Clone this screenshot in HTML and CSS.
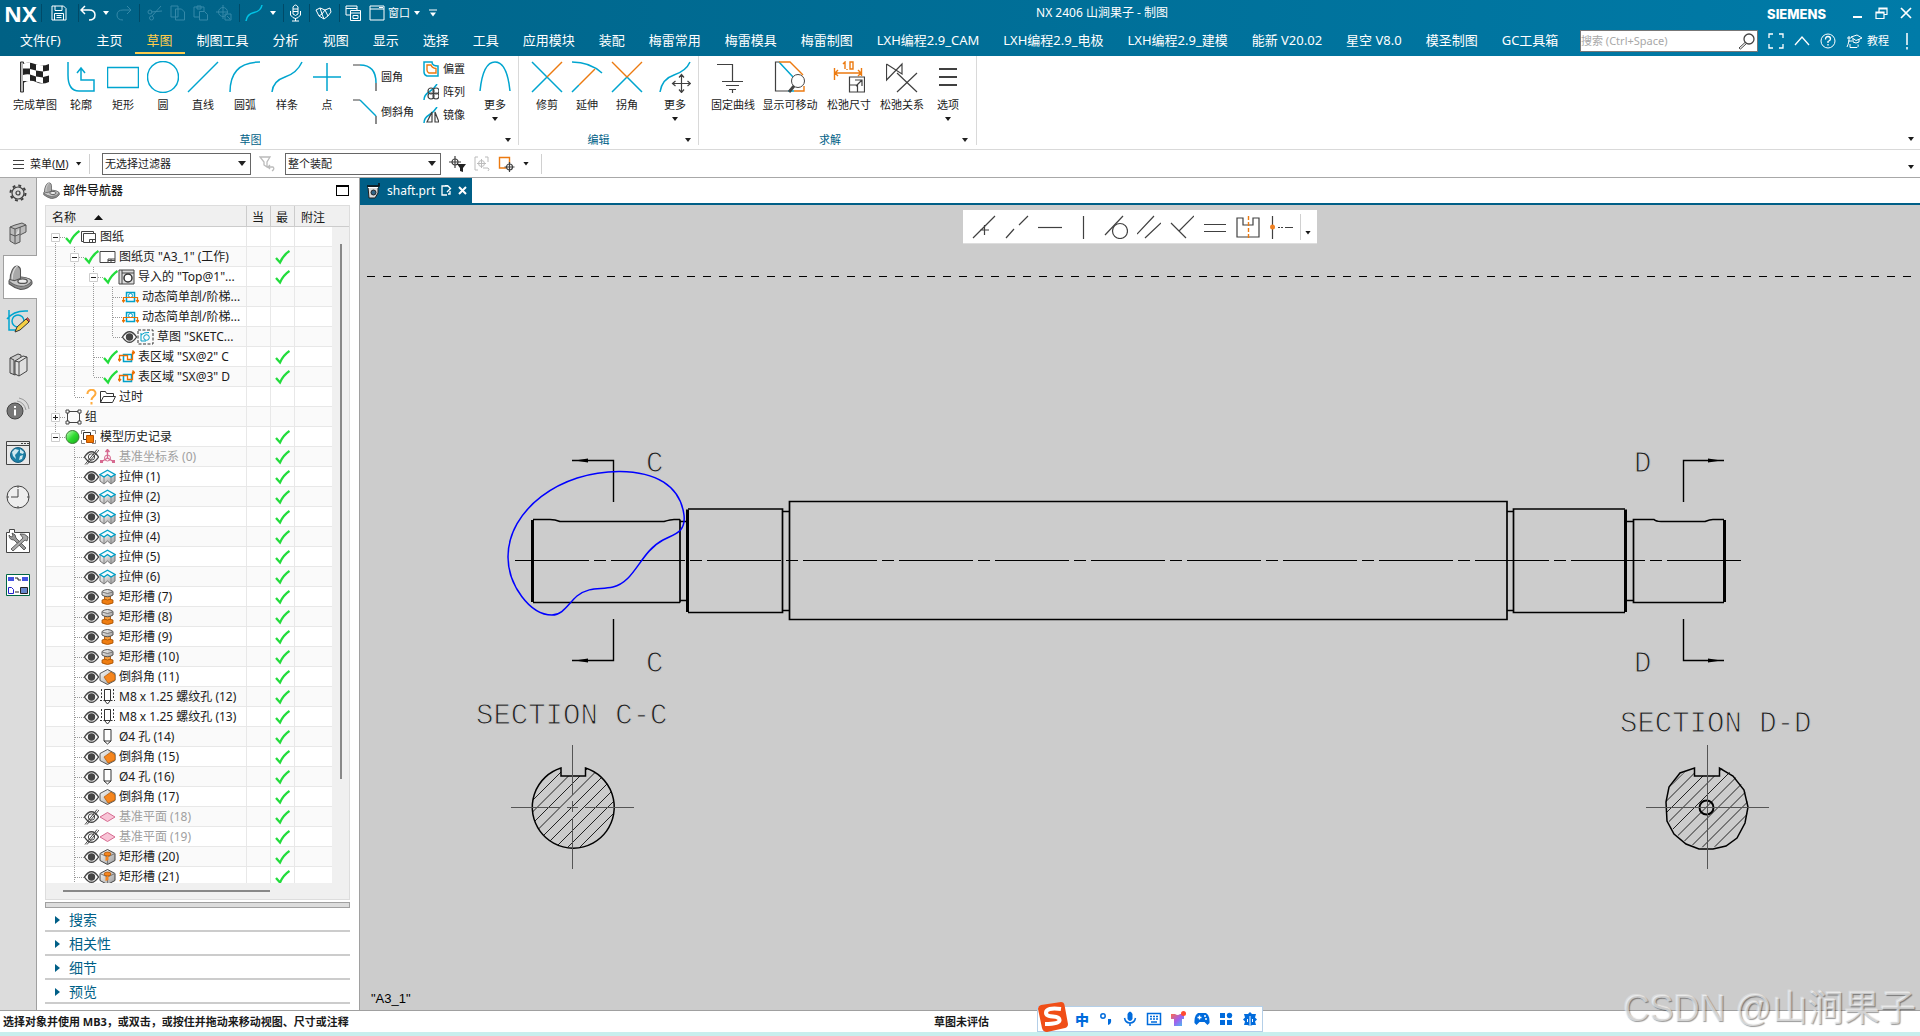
FILE: index.html
```html
<!DOCTYPE html>
<html lang="zh-CN">
<head>
<meta charset="utf-8">
<title>NX 2406 - 制图</title>
<link rel="stylesheet" href="styles.css">
</head>
<body>
<svg class="defs" aria-hidden="true">
  <symbol id="gv" viewBox="0 0 19 20"><path d="M9.5 0V20" class="dot"/></symbol>
  <symbol id="gt" viewBox="0 0 19 20"><path d="M9.5 0V20M10 10.500H19" class="dot"/></symbol>
  <symbol id="gl" viewBox="0 0 19 20"><path d="M9.5 0V10M10 10.500H19" class="dot"/></symbol>
  <symbol id="minus" viewBox="0 0 19 20"><path d="M9.5 0V20M10 10.500H19" class="dot"/><path d="M5.500 6.500h8v8h-8z" fill="#fff" stroke="#ccc"/><path d="M7 10.500h5" stroke="#222"/></symbol>
  <symbol id="minus-top" viewBox="0 0 19 20"><path d="M9.500 14V20M10 10.500H19" class="dot"/><path d="M5.500 6.500h8v8h-8z" fill="#fff" stroke="#ccc"/><path d="M7 10.500h5" stroke="#222"/></symbol>
  <symbol id="minus-end" viewBox="0 0 19 20"><path d="M9.500 0V6M10 10.500H19" class="dot"/><path d="M5.500 6.500h8v8h-8z" fill="#fff" stroke="#ccc"/><path d="M7 10.500h5" stroke="#222"/></symbol>
  <symbol id="plus" viewBox="0 0 19 20"><path d="M9.5 0V20M10 10.500H19" class="dot"/><path d="M5.500 6.500h8v8h-8z" fill="#fff" stroke="#ccc"/><path d="M7 10.500h5M9.500 8v5" stroke="#222"/></symbol>
  <symbol id="ok" viewBox="0 0 15 16"><path d="M1 9l4 4.500C7 9 10 5 14.500 2" fill="none" stroke="#22dc3c" stroke-width="2.300"/></symbol>
  <symbol id="eye" viewBox="0 0 15 16"><path d="M.5 8Q7.500-2.500 14.500 8Q7.500 18.500 .5 8z" fill="#fff" stroke="#444" stroke-width="1.300"/><circle cx="7.500" cy="8" r="3.700" fill="#444"/></symbol>
  <symbol id="eye-off" viewBox="0 0 15 16"><path d="M.5 8Q7.500-2.500 14.500 8Q7.500 18.500 .5 8z" fill="none" stroke="#444" stroke-width="1.300"/><circle cx="7.500" cy="8" r="3.200" fill="none" stroke="#444"/><path d="M1 15.500L13 .5M3 15.500L15 1" stroke="#444"/></symbol>
  <symbol id="sheets" viewBox="0 0 17 16"><path d="M3.500 12.500h-2v-10h12v2M3.500 4.500h12v9h-12z" fill="none" stroke="#444"/><path d="M9.500 13.500v-3h6M12.500 10.500v3" fill="none" stroke="#444"/></symbol>
  <symbol id="sheet" viewBox="0 0 17 16"><path d="M1 2.500h15v11H1z" fill="#fff" stroke="#444"/><path d="M9 13v-3h7M12 10v3M9 11.500h7" fill="none" stroke="#444"/></symbol>
  <symbol id="view" viewBox="0 0 17 16"><path d="M1 1h15v14H1z" fill="#ddd" stroke="#444"/><path d="M4 1v14M4 4h12" stroke="#444"/><circle cx="10" cy="9" r="4" fill="#fff" stroke="#333" stroke-width="1.500"/></symbol>
  <symbol id="cut-view" viewBox="0 0 17 16"><path d="M4.500 3.500h8v9h-8z" fill="none" stroke="#00a0c8" stroke-width="1.500"/><circle cx="8.500" cy="6.500" r="2" fill="#fff" stroke="#00a0c8"/><path d="M1.500 12V8.500h14V12M0 11l1.500 2L3 11M14 11l1.500 2 1.500-2" fill="none" stroke="#ec6f00" stroke-width="1.200"/></symbol>
  <symbol id="sketch" viewBox="0 0 17 16"><path d="M1 1h15v14H1z" fill="none" stroke="#333" stroke-dasharray="3 1.500"/><path d="M4 4v8h5M4 6q3-3 8-2.500" fill="none" stroke="#00a0c8"/><circle cx="9.500" cy="8.500" r="2.800" fill="none" stroke="#00a0c8"/></symbol>
  <symbol id="section" viewBox="0 0 17 16"><path d="M5.500 5.500h8v7h-8z" fill="none" stroke="#00a0c8" stroke-width="1.500"/><path d="M1.500 11V6.500h8v4h5v-7h2M0 10l1.500 2L3 10M14.500 1.500l2 2-2 2" fill="none" stroke="#ec6f00" stroke-width="1.300"/></symbol>
  <symbol id="ask" viewBox="0 0 15 16"><path d="M3.500 5C3-.5 12-.5 11.500 4.500c0 3-4 3-4 6.500" fill="none" stroke="#ffab3d" stroke-width="2"/><path d="M6.500 13h2v2.500h-2z" fill="#ffab3d"/></symbol>
  <symbol id="folder" viewBox="0 0 17 16"><path d="M1.500 13.500V2.500h5l1 2h7v3M1.500 13.500l3-6h12l-3 6z" fill="none" stroke="#333"/></symbol>
  <symbol id="group" viewBox="0 0 17 16"><path d="M2.500 2.500h12v11h-12z" fill="none" stroke="#444"/><path d="M1 1h3v3H1zM13 1h3v3h-3zM1 12h3v3H1zM13 12h3v3h-3z" fill="#fff" stroke="#444"/></symbol>
  <symbol id="ball" viewBox="0 0 15 16"><circle cx="7.500" cy="8" r="6.500" fill="url(#green)" stroke="#397c32"/></symbol>
  <symbol id="history" viewBox="0 0 17 16"><path d="M1.500 5V1.500H5M12 1.500h3.500V5M15.500 11v3.500H12M5 14.500H1.500V11" fill="none" stroke="#888"/><path d="M3.500 3.500h7v7h-7z" fill="#fff" stroke="#333"/><path d="M6.500 6.500h7v7h-7z" fill="#f07800" stroke="#b85000"/></symbol>
  <symbol id="csys" viewBox="0 0 17 16"><path d="M8.500 1v8M8.500 9L2 13M8.500 9L15 13M6.500 3l2-2.500 2 2.500" fill="none" stroke="#d66a90" stroke-width="1.400"/><circle cx="8.500" cy="9" r="3" fill="none" stroke="#d66a90"/><path d="M1 11h3v3H1zM13 11h3v3h-3z" fill="#d66a90"/></symbol>
  <symbol id="extrude" viewBox="0 0 17 16"><path d="M1 5.500l4 2 3.500-2 3.500 2 4-2v6.500l-4 3-3.500-3-3.500 3-4-3z" fill="url(#steel)" stroke="#777"/><path d="M5 8v6.500M12 8v6.500" stroke="#888"/><path d="M1 5.500L8.500 1.200 16 5.500 12 8 8.500 5.500 5 8z" fill="#f2fbfd" stroke="#00a0c8" stroke-width="1.300"/></symbol>
  <symbol id="groove" viewBox="0 0 17 16"><path d="M3 11q5.500-3 11 0v3q-5.500 3-11 0z" fill="#ef7d10" stroke="#a04c00" stroke-width=".8"/><path d="M5.500 7h6v3q-3 2-6 0z" fill="#f7a040" stroke="#a04c00" stroke-width=".8"/><path d="M3 2.500q5.500-4 11 0v3.500q-5.500 3.500-11 0z" fill="url(#steel)" stroke="#555"/><path d="M3 3q5.500 3 11 0" fill="none" stroke="#777"/></symbol>
  <symbol id="chamfer" viewBox="0 0 17 16"><path d="M1 4.500L8.500.5 16 4.500v7L8.500 15.500 1 11.500z" fill="url(#steel)" stroke="#555"/><path d="M5 8l7-5 4 3v5l-7 3z" fill="#f6861f" stroke="#b85a00" stroke-width=".7"/></symbol>
  <symbol id="thread" viewBox="0 0 17 16"><path d="M5.500.5h6v11h-6zM5.500 11.500l3 3.500 3-3.500" fill="#fff" stroke="#333"/><path d="M2.500 0v10M14.500 0v10M1 11.500h15" fill="none" stroke="#333" stroke-dasharray="2 1.500"/></symbol>
  <symbol id="hole" viewBox="0 0 17 16"><path d="M5 .5h7v11.500l-3.500 3L5 12z" fill="#fff" stroke="#333"/><path d="M5 12h7" stroke="#333"/></symbol>
  <symbol id="plane" viewBox="0 0 17 16"><path d="M1 8l7.500-4.500L16 8l-7.500 4.500z" fill="#f8c4d6" stroke="#d66a90"/></symbol>
  <symbol id="slot" viewBox="0 0 17 16"><path d="M1 4.500L8.500.5 16 4.500v7L8.500 15.500 1 11.500z" fill="url(#steel)" stroke="#444"/><path d="M1 4.500l7.500 3.500L16 4.500M8.500 8v7.500" fill="none" stroke="#777"/><ellipse cx="8.500" cy="5" rx="3.500" ry="2" fill="#f6861f" stroke="#a04c00" stroke-width=".7"/><path d="M6.500 8l3-1v4l-3 1z" fill="#f6861f"/></symbol>
  <symbol id="bracket" viewBox="0 0 24 24"><path d="M1 16q0-2 4-3l8-1q10 1 10 4v2q-3 5-11 5.500Q6 22 1 18z" fill="#8f8f8f" stroke="#555"/><path d="M1 15.500q0-2 4-3l8-1q9 1 9.500 4-3 5-10.500 5Q6 20 1 15.500z" fill="#c8c8c8" stroke="#666"/><path d="M2 14q0-5 2-9 2-4 5-4 3 1 3 4v8l-6 2z" fill="#a8a8a8" stroke="#555"/><path d="M4 14q0-6 2-9.500Q8 1 9.500 1" fill="none" stroke="#ddd"/><ellipse cx="14" cy="15.500" rx="4.500" ry="2.200" fill="#eee" stroke="#555" stroke-width="1.300"/></symbol>
  <linearGradient id="green" x1="0" y1="0" x2="1" y2="1"><stop offset="0" stop-color="#d0ffc8"/><stop offset=".5" stop-color="#2fdc2f"/><stop offset="1" stop-color="#14a81b"/></linearGradient>
  <linearGradient id="steel" x1="0" y1="0" x2="1" y2="1"><stop offset="0" stop-color="#fff"/><stop offset="1" stop-color="#999"/></linearGradient>
  <linearGradient id="shirt" x1="0" y1="0" x2="1" y2="1"><stop offset="0" stop-color="#ff6a4a"/><stop offset=".5" stop-color="#a060f0"/><stop offset="1" stop-color="#40c8f0"/></linearGradient>
</svg>

<header class="top">
  <div class="titlebar">
    <span class="nx">NX</span><i class="sep"></i>
    <button class="q save" aria-label="保存"><svg width="16" height="16" viewBox="0 0 16 16"><path d="M1 1h11.500L15 3.500V15H1zM4 1v4.500h7V1M3.500 15V8.500h9V15M5.500 10.500h5M5.500 12.500h5"/></svg></button>
    <i class="sep"></i>
    <button class="q undo" aria-label="撤销"><svg width="16" height="16" viewBox="0 0 16 16"><path d="M5 1L1 5l4 4M1 5h8q6 0 6 5t-6 5" stroke-width="1.500"/></svg></button>
    <i class="tri"></i>
    <button class="q dim redo" aria-label="重做"><svg width="16" height="16" viewBox="0 0 16 16"><path d="M11 1l4 4-4 4M15 5H7q-6 0-6 5t6 5"/></svg></button>
    <i class="sep"></i>
    <button class="q dim" aria-label="剪切"><svg width="16" height="16" viewBox="0 0 16 16"><path d="M14 1L5 11M15 6L4 7"/><circle cx="3" cy="7" r="2"/><circle cx="4.500" cy="13" r="2"/></svg></button>
    <button class="q dim" aria-label="复制"><svg width="16" height="16" viewBox="0 0 16 16"><path d="M1 1h7v11H1zM5.500 4h6l3 3v8h-9z"/></svg></button>
    <button class="q dim" aria-label="粘贴"><svg width="16" height="16" viewBox="0 0 16 16"><path d="M6 12H1V2h10v4M4 2V1h4v3H4zM6.500 6.500h5l3 3V15h-8z"/></svg></button>
    <button class="q dim" aria-label="重复命令"><svg width="16" height="16" viewBox="0 0 16 16"><circle cx="7" cy="7" r="4.500"/><path d="M7 0v14M0 7h12M9 9h6v6H9zM11 11l3 3"/></svg></button>
    <i class="sep"></i>
    <button class="q curve" aria-label="曲线"><svg width="18" height="18" viewBox="0 0 18 18"><path class="lit" d="M1 17Q2 10 9 8.500T17 1"/></svg></button>
    <i class="tri"></i><i class="sep"></i>
    <button class="q near" aria-label="语音"><svg width="13" height="18" viewBox="0 0 13 18"><path d="M4 3q2.500-4 5 0v7q-2.500 3-5 0zM1.500 7v4q5 7 10 0V7M6.500 14v3M3 17h7M4 5h5M4 7.500h5"/></svg></button>
    <i class="sep"></i>
    <button class="q near" aria-label="橡皮"><svg width="17" height="14" viewBox="0 0 17 14"><path d="M1 4l4-2 5 2 3 6-4 3-5-3zM5 2l2 6M10 4l5-2 1 4-3 4M7 8l3-4M4 10l3-2 2 5"/></svg></button>
    <i class="sep"></i>
    <button class="q near" aria-label="切换窗口"><svg width="17" height="17" viewBox="0 0 17 17"><path d="M5 10H1V1h11v4M1 3.500h11M5.500 5.500h10v10h-10zM5.500 8h10M8 10.500h5v3H8z"/></svg></button>
    <button class="q win"><svg width="16" height="16" viewBox="0 0 16 16"><path d="M1 1h14v14H1zM1 4h14M10 2.500h4"/></svg>窗口</button>
    <i class="tri win-tri"></i>
    <button class="q" aria-label="自定义快速访问"><svg width="8" height="8" viewBox="0 0 8 8"><path d="M0 1h8"/><path class="solid" d="M1 3.500h6l-3 4z"/></svg></button>
    <h1>NX 2406 山涧果子 - 制图</h1>
    <b class="siemens">SIEMENS</b>
    <button class="q w1" aria-label="最小化"><svg width="10" height="14" viewBox="0 0 10 14"><path d="M0 11h9" stroke-width="2"/></svg></button>
    <button class="q w2" aria-label="还原"><svg width="13" height="13" viewBox="0 0 13 13"><path d="M4 4.500V1h8v6.500H9M1 5h8v6.500H1zM4 2h8M1 6h8" stroke-width="1.200"/></svg></button>
    <button class="q w3" aria-label="关闭"><svg width="12" height="12" viewBox="0 0 12 12"><path d="M1 1l10 10M11 1L1 11" stroke-width="1.700"/></svg></button>
  </div>
  <nav class="menubar">
    <a class="file" href="#">文件(F)</a><a href="#">主页</a><a class="on" href="#">草图</a><a href="#">制图工具</a><a href="#">分析</a><a href="#">视图</a><a href="#">显示</a><a href="#">选择</a><a href="#">工具</a><a href="#">应用模块</a><a href="#">装配</a><a href="#">梅雷常用</a><a href="#">梅雷模具</a><a href="#">梅雷制图</a><a href="#">LXH编程2.9_CAM</a><a href="#">LXH编程2.9_电极</a><a href="#">LXH编程2.9_建模</a><a href="#">能新 V20.02</a><a href="#">星空 V8.0</a><a href="#">模圣制图</a><a href="#">GC工具箱</a>
    <div class="tools-right">
      <label class="find"><input type="text" placeholder="搜索 (Ctrl+Space)" aria-label="搜索"><svg width="17" height="17" viewBox="0 0 17 17"><circle cx="11" cy="6" r="5" fill="#fff" stroke="#444" stroke-width="1.300"/><path d="M7 9.500L1 15l1.500 1L8.500 10.500" fill="none" stroke="#444"/></svg></label>
      <button class="q" aria-label="全屏"><svg width="16" height="16" viewBox="0 0 16 16"><path d="M1 5V1h4M11 1h4v4M15 11v4h-4M5 15H1v-4" stroke-width="1.300"/></svg></button>
      <button class="q" aria-label="收起"><svg width="16" height="16" viewBox="0 0 16 16"><path d="M1 12l7-8 7 8" stroke-width="1.300"/></svg></button>
      <button class="q" aria-label="帮助"><svg width="16" height="16" viewBox="0 0 16 16"><circle cx="8" cy="8" r="7"/><path d="M5.500 6.500q0-3 2.500-3t2.500 2.500q0 1.500-2.500 2.500v1.500M8 11v1.500" stroke-width="1.300"/></svg></button>
      <button class="q"><svg width="17" height="16" viewBox="0 0 17 16"><path d="M5 4l6-2 5 3-6 2.500zM7 6v3q3 2 6 0V6M1 5h4M3 3v5q-1 4-2 6M6 8H2M4 11v3.500h7q2-1 1-3"/></svg>教程</button>
      <button class="q bang" aria-label="通知"><svg width="4" height="18" viewBox="0 0 4 18"><path d="M2 1v12M2 15v2.500" stroke-width="1.500"/></svg></button>
    </div>
  </nav>
</header>

<section class="ribbon">
  <div class="grp">
    <div class="tools">
      <button class="t w48"><svg width="32" height="32"><path d="M1.500 1v30h3V1z" fill="#bbb" stroke="#333"/><path d="M4 3q5-3 12 0t14 0v18q-7 3-13 0T4 22z" fill="#222"/><path d="M4 3q3-2 7-1.500v6H4zM17 3.500l7 1v6l-7-1zM11 8l6 1.500v6l-6-2zM24 10.500l6-1v5l-6 1.500zM4 14q3-1 7-.500V20H4zM17 15.500l7 1v6l-7-2z" fill="#fff"/></svg>完成草图</button>
      <button class="t w44"><svg width="32" height="32"><path d="M3 1v13q0 16 11 16h15V19H16V8M12 12l4-5 4 5" class="c"/></svg>轮廓</button>
      <button class="t"><svg width="32" height="32"><path d="M.5 6.500h31v20H.5z" class="c"/></svg>矩形</button>
      <button class="t"><svg width="32" height="32"><circle cx="16" cy="16" r="15.500" class="c"/></svg>圆</button>
      <button class="t"><svg width="32" height="32"><path d="M1 31L31 1" class="c"/></svg>直线</button>
      <button class="t w44"><svg width="32" height="32"><path d="M1 31Q1 1 31 1" class="c"/></svg>圆弧</button>
      <button class="t"><svg width="32" height="32"><path d="M1 31Q2 20 14 16T31 1" class="c"/></svg>样条</button>
      <button class="t"><svg width="32" height="32"><path d="M2 16h28M16 2v28" class="c"/></svg>点</button>
      <div class="col mid">
        <button class="s"><svg width="24" height="28"><path d="M0 2h7M23 20v8" class="k"/><path d="M7 2q16 0 16 18" class="c"/></svg>圆角</button>
        <button class="s"><svg width="24" height="28"><path d="M0 2h7M23 18v8" class="k"/><path d="M7 2l16 16" class="c"/></svg>倒斜角</button>
      </div>
      <div class="col small">
        <button class="s"><svg width="16" height="16"><path d="M1 1h8q0 4 6 4v10H4q-3-1-3-4z" class="c"/><path d="M4 4h4q1 3 5 3.500V12H6q-2-1-2-3z" class="o"/></svg>偏置</button>
        <button class="s"><svg width="16" height="16"><path d="M1 16q0-5 5-8T14 0" class="c"/><circle cx="8" cy="7" r="3" class="k"/><circle cx="13" cy="7" r="3" class="k"/><circle cx="8" cy="12" r="3" class="k"/><circle cx="13" cy="12" r="3" class="k"/></svg>阵列</button>
        <button class="s"><svg width="16" height="16"><path d="M1 16q0-5 5-8T14 0" class="c"/><path d="M9 5v10H4zM12 5v10h4z" class="k"/></svg>镜像</button>
      </div>
      <button class="t more"><svg width="32" height="32"><path d="M1 30Q4 1 16 1T31 30" class="c"/></svg>更多<i class="tri"></i></button>
    </div>
    <div class="cap"><span>草图</span><button aria-label="草图选项"><i class="tri"></i></button></div>
  </div>
  <div class="grp g2">
    <div class="tools">
      <button class="t"><svg width="32" height="32"><path d="M1 1l30 30M1 31l15-15" class="c"/><path d="M16 16L31 1" class="o"/></svg>修剪</button>
      <button class="t"><svg width="32" height="32"><path d="M1 1q18 0 30 11M1 31l7-7" class="c"/><path d="M8 24L24 8" class="o"/></svg>延伸</button>
      <button class="t"><svg width="32" height="32"><path d="M1 31l15-15 15 15" class="c"/><path d="M1 1l15 15L31 1" class="o"/></svg>拐角</button>
      <button class="t more2"><svg width="32" height="32"><path d="M1 31q2-13 14-17T31 1" class="c"/><path d="M22.500 14v17M14 22.500h17M20 16.500l2.500-3 2.500 3M20 28.500l2.500 3 2.500-3M16.500 20l-3 2.500 3 2.500M28.500 20l3 2.500-3 2.500" class="k"/></svg>更多<i class="tri"></i></button>
    </div>
    <div class="cap"><span>编辑</span><button aria-label="编辑选项"><i class="tri"></i></button></div>
  </div>
  <div class="grp g3">
    <div class="tools">
      <button class="t w56"><svg width="32" height="32"><path d="M0 3.500h15.500V20M5 20.500h21M9 24.500h13M12 28.500h7M15.500 28v4" class="k"/></svg>固定曲线</button>
      <button class="t w58"><svg width="32" height="32"><path d="M5 1H1.500v29H14M1.500 1h4" class="k"/><path d="M5 1l14 15M14 30h6" class="c"/><path d="M5 1h11l13 13M20 30h10v-5" class="o"/><circle cx="24" cy="20" r="6.500" fill="#fff" stroke="#444"/><path d="M20 25l-5 6" stroke="#444" stroke-width="3"/></svg>显示可移动</button>
      <button class="t w60"><svg width="32" height="32"><path d="M1.500 7v12M28.500 7v8M2 12h26M5 9l-3 3 3 3M25 9l3 3-3 3M10 3l2-2v7M17 1h3v7h-3zM14 8v1" class="o"/><path d="M16.500 16h15v15h-15zM16.500 24h8v7M22 19h7v6M29 19l-6 6" class="k"/></svg>松弛尺寸</button>
      <button class="t w46"><svg width="32" height="32"><path d="M.5 3v16L16 3v10L.5 3M11 12l20 19M31 12L11 31" class="k"/></svg>松弛关系</button>
      <button class="t w46"><svg width="32" height="32"><path d="M7 8h18M7 16h18M7 24h18" stroke="#404040" stroke-width="2"/></svg>选项<i class="tri"></i></button>
    </div>
    <div class="cap"><span>求解</span><button aria-label="求解选项"><i class="tri"></i></button></div>
  </div>
  <button class="edge" aria-label="功能区选项"><i class="tri"></i></button>
</section>

<section class="selbar">
  <button class="menu"><svg width="11" height="10"><path d="M0 1.500h11M0 5.500h11M0 9.500h11" class="k"/></svg>菜单(<u>M</u>)<i class="tri"></i></button>
  <i class="bar"></i>
  <span class="combo c1"><select aria-label="类型过滤器"><option>无选择过滤器</option></select></span>
  <button class="ib" aria-label="重置过滤器"><svg width="16" height="16"><path d="M1 1h10L8 6v5l-3-2V6zM9 11h5q2 2-1 4M11 9l-2 2 2 2" fill="none" stroke="#bbb" stroke-width="1.300"/></svg></button>
  <span class="combo c2"><select aria-label="选择范围"><option>整个装配</option></select></span>
  <button class="ib" aria-label="捕捉点"><svg width="18" height="16"><circle cx="6" cy="6" r="3" class="k"/><path d="M6 0v12M0 6h12" class="k"/><path d="M8 8h9l-3 4v4l-3-1v-3z" fill="#222"/></svg></button>
  <button class="ib i3" aria-label="恢复"><svg width="17" height="16"><path d="M4 1H1v13h3M11 1h3v5M7.500 3v9M3 7.500h9M9 12h5q2 1 0 3" fill="none" stroke="#bbb"/><circle cx="7.500" cy="7.500" r="3" fill="none" stroke="#bbb"/></svg></button>
  <button class="ib i3" aria-label="点构造器"><svg width="17" height="16"><path d="M8 12H1.500V1.500h10V7" class="o"/><circle cx="11.500" cy="11" r="3" class="k"/><path d="M11.500 6v10M6.500 11h10" class="k"/></svg></button>
  <i class="tri"></i><i class="bar"></i>
  <button class="edge" aria-label="工具条选项"><i class="tri"></i></button>
</section>

<div class="work">
  <nav class="rail">
    <button class="gear" aria-label="设置"><svg width="18" height="18" viewBox="0 0 18 18"><circle cx="9" cy="9" r="6" class="k"/><circle cx="9" cy="9" r="7.500" fill="none" stroke="#404040" stroke-width="2" stroke-dasharray="2.900 3"/><circle cx="9" cy="9" r="2" class="k"/></svg></button>
    <button aria-label="装配导航器"><svg width="24" height="24" viewBox="0 0 24 24"><path d="M4 6l5-2 7-2 4 2v7l-6 3v7l-5 2-5-3zM4 6l5 2v14M9 8l11-4M9 15l5-2V6M4 13l5 2" fill="#bbb" stroke="#555"/></svg></button>
    <button class="on" aria-label="部件导航器"><svg width="25" height="25"><use href="#bracket"/></svg></button>
    <button aria-label="草图"><svg width="24" height="24" viewBox="0 0 24 24"><path d="M3 1v20h8M1 10Q8 1 22 2" class="c"/><circle cx="12" cy="12" r="6" class="c"/><path d="M9 23l2-5 9-8 3 3-9 8z" fill="#f6cf45" stroke="#333"/><path d="M20 10l1.500-1.500 2.500 3L23 13z" fill="#e0504a" stroke="#333" stroke-width=".6"/></svg></button>
    <button aria-label="重用库"><svg width="24" height="24" viewBox="0 0 24 24"><path d="M4 5l8-4 3 1v16l-6 4-5-2zM4 5l4 2v15" fill="#ccc" stroke="#444"/><path d="M9 8l8-5 4 1v14l-8 5-4-2zM9 8l4 1v14M13 9l8-5" fill="#e0e0e0" stroke="#444"/></svg></button>
    <button aria-label="信息"><svg width="24" height="24" viewBox="0 0 24 24"><circle cx="9" cy="14" r="8" fill="#777" stroke="#444"/><path d="M9 9v2M9 12.500v6" stroke="#fff" stroke-width="2"/><path d="M11 4q7 1 9 9M13 1q9 2 10 11" fill="none" stroke="#999"/></svg></button>
    <button aria-label="浏览器"><svg width="24" height="24" viewBox="0 0 24 24"><path d="M.5.5h23v23H.5zM.5 4.500h23" fill="#e8e8e8" stroke="#444"/><path d="M15 2.500h2M18 2.500h2M21 2.500h2" stroke="#444"/><circle cx="12" cy="14" r="7.500" fill="#1b7fa5" stroke="#1b5f80"/><path d="M6 11l3-3 4 1-2 3-2 2 1 4-3-3zM14 8l4 3-1 2-3-1zM14 15l3-1-1 4-3 1z" fill="#cfe9f0"/></svg></button>
    <button aria-label="历史"><svg width="24" height="24" viewBox="0 0 24 24"><circle cx="12" cy="12" r="11" fill="#eee" stroke="#444"/><path d="M12 4v8H5M12 1v2M12 21v2M1 12h2M21 12h2" fill="none" stroke="#444"/></svg></button>
    <button aria-label="系统工具"><svg width="24" height="24" viewBox="0 0 24 24"><path d="M.5 3.500h3v-3h5v3h15v20H.5z" fill="#fff" stroke="#444"/><path d="M3 6q0 5 5 5l10 10 2-2L10 9q0-4-4-5l1 3-2 1z" fill="#999" stroke="#444" stroke-width=".8"/><path d="M21 12l1-4q-3-4-8-3l3 4L5 20l2 2 12-11z" fill="#aaa" stroke="#444" stroke-width=".8"/></svg></button>
    <button aria-label="角色"><svg width="24" height="22" viewBox="0 0 24 22"><path d="M.5.5h23v21H.5z" fill="#fff" stroke="#064"/><path d="M2 3h6v4H2zM16 3h6v4h-6z" fill="#4454e0"/><path d="M2.500 13.500h3l2 2v4h-5z" fill="#fff" stroke="#22c"/><path d="M14.500 13.500h7v6h-7z" fill="#68c" stroke="#222"/><path d="M9 4h3v2h3M9 18h4" fill="none" stroke="#222"/></svg></button>
  </nav>

  <aside class="panel">
    <h2><svg width="17" height="17"><use href="#bracket"/></svg>部件导航器<button class="max" aria-label="最大化"></button></h2>
    <div class="tree">
      <div class="tree-body">
        <div class="rows">
        <table>
          <colgroup><col><col class="n"><col class="n"><col class="note"></colgroup>
          <thead><tr><th>名称<i class="sort"></i></th><th class="mid-h">当</th><th class="mid-h">最</th><th class="nb">附注</th></tr></thead>
          <tbody>
          <tr><td><div><button aria-label="折叠"><svg class="g"><use href="#minus-top"/></svg></button><svg class="st"><use href="#ok"/></svg><svg class="ic"><use href="#sheets"/></svg>图纸</div></td><td></td><td></td><td></td></tr>
          <tr><td><div><svg class="g"><use href="#gv"/></svg><button aria-label="折叠"><svg class="g"><use href="#minus"/></svg></button><svg class="st"><use href="#ok"/></svg><svg class="ic"><use href="#sheet"/></svg>图纸页 "A3_1" (工作)</div></td><td></td><td><svg class="st"><use href="#ok"/></svg></td><td></td></tr>
          <tr><td><div><svg class="g"><use href="#gv"/></svg><svg class="g"><use href="#gv"/></svg><button aria-label="折叠"><svg class="g"><use href="#minus"/></svg></button><svg class="st"><use href="#ok"/></svg><svg class="ic"><use href="#view"/></svg>导入的 "Top@1"...</div></td><td></td><td><svg class="st"><use href="#ok"/></svg></td><td></td></tr>
          <tr><td><div><svg class="g"><use href="#gv"/></svg><svg class="g"><use href="#gv"/></svg><svg class="g"><use href="#gv"/></svg><svg class="g"><use href="#gt"/></svg><svg class="ic"><use href="#cut-view"/></svg>动态简单剖/阶梯...</div></td><td></td><td></td><td></td></tr>
          <tr><td><div><svg class="g"><use href="#gv"/></svg><svg class="g"><use href="#gv"/></svg><svg class="g"><use href="#gv"/></svg><svg class="g"><use href="#gt"/></svg><svg class="ic"><use href="#cut-view"/></svg>动态简单剖/阶梯...</div></td><td></td><td></td><td></td></tr>
          <tr><td><div><svg class="g"><use href="#gv"/></svg><svg class="g"><use href="#gv"/></svg><svg class="g"><use href="#gv"/></svg><svg class="g"><use href="#gl"/></svg><svg class="st"><use href="#eye"/></svg><svg class="ic"><use href="#sketch"/></svg>草图 "SKETC...</div></td><td></td><td></td><td></td></tr>
          <tr><td><div><svg class="g"><use href="#gv"/></svg><svg class="g"><use href="#gv"/></svg><svg class="g"><use href="#gt"/></svg><svg class="st"><use href="#ok"/></svg><svg class="ic"><use href="#section"/></svg>表区域 "SX@2" C</div></td><td></td><td><svg class="st"><use href="#ok"/></svg></td><td></td></tr>
          <tr><td><div><svg class="g"><use href="#gv"/></svg><svg class="g"><use href="#gv"/></svg><svg class="g"><use href="#gl"/></svg><svg class="st"><use href="#ok"/></svg><svg class="ic"><use href="#section"/></svg>表区域 "SX@3" D</div></td><td></td><td><svg class="st"><use href="#ok"/></svg></td><td></td></tr>
          <tr><td><div><svg class="g"><use href="#gv"/></svg><svg class="g"><use href="#gl"/></svg><svg class="st"><use href="#ask"/></svg><svg class="ic"><use href="#folder"/></svg>过时</div></td><td></td><td></td><td></td></tr>
          <tr><td><div><button aria-label="展开"><svg class="g"><use href="#plus"/></svg></button><svg class="ic"><use href="#group"/></svg>组</div></td><td></td><td></td><td></td></tr>
          <tr><td><div><button aria-label="折叠"><svg class="g"><use href="#minus-end"/></svg></button><svg class="st"><use href="#ball"/></svg><svg class="ic"><use href="#history"/></svg>模型历史记录</div></td><td></td><td><svg class="st"><use href="#ok"/></svg></td><td></td></tr>
          <tr class="off"><td><div><i class="g"></i><svg class="g"><use href="#gt"/></svg><svg class="st"><use href="#eye-off"/></svg><svg class="ic"><use href="#csys"/></svg>基准坐标系 (0)</div></td><td></td><td><svg class="st"><use href="#ok"/></svg></td><td></td></tr>
          <tr><td><div><i class="g"></i><svg class="g"><use href="#gt"/></svg><svg class="st"><use href="#eye"/></svg><svg class="ic"><use href="#extrude"/></svg>拉伸 (1)</div></td><td></td><td><svg class="st"><use href="#ok"/></svg></td><td></td></tr>
          <tr><td><div><i class="g"></i><svg class="g"><use href="#gt"/></svg><svg class="st"><use href="#eye"/></svg><svg class="ic"><use href="#extrude"/></svg>拉伸 (2)</div></td><td></td><td><svg class="st"><use href="#ok"/></svg></td><td></td></tr>
          <tr><td><div><i class="g"></i><svg class="g"><use href="#gt"/></svg><svg class="st"><use href="#eye"/></svg><svg class="ic"><use href="#extrude"/></svg>拉伸 (3)</div></td><td></td><td><svg class="st"><use href="#ok"/></svg></td><td></td></tr>
          <tr><td><div><i class="g"></i><svg class="g"><use href="#gt"/></svg><svg class="st"><use href="#eye"/></svg><svg class="ic"><use href="#extrude"/></svg>拉伸 (4)</div></td><td></td><td><svg class="st"><use href="#ok"/></svg></td><td></td></tr>
          <tr><td><div><i class="g"></i><svg class="g"><use href="#gt"/></svg><svg class="st"><use href="#eye"/></svg><svg class="ic"><use href="#extrude"/></svg>拉伸 (5)</div></td><td></td><td><svg class="st"><use href="#ok"/></svg></td><td></td></tr>
          <tr><td><div><i class="g"></i><svg class="g"><use href="#gt"/></svg><svg class="st"><use href="#eye"/></svg><svg class="ic"><use href="#extrude"/></svg>拉伸 (6)</div></td><td></td><td><svg class="st"><use href="#ok"/></svg></td><td></td></tr>
          <tr><td><div><i class="g"></i><svg class="g"><use href="#gt"/></svg><svg class="st"><use href="#eye"/></svg><svg class="ic"><use href="#groove"/></svg>矩形槽 (7)</div></td><td></td><td><svg class="st"><use href="#ok"/></svg></td><td></td></tr>
          <tr><td><div><i class="g"></i><svg class="g"><use href="#gt"/></svg><svg class="st"><use href="#eye"/></svg><svg class="ic"><use href="#groove"/></svg>矩形槽 (8)</div></td><td></td><td><svg class="st"><use href="#ok"/></svg></td><td></td></tr>
          <tr><td><div><i class="g"></i><svg class="g"><use href="#gt"/></svg><svg class="st"><use href="#eye"/></svg><svg class="ic"><use href="#groove"/></svg>矩形槽 (9)</div></td><td></td><td><svg class="st"><use href="#ok"/></svg></td><td></td></tr>
          <tr><td><div><i class="g"></i><svg class="g"><use href="#gt"/></svg><svg class="st"><use href="#eye"/></svg><svg class="ic"><use href="#groove"/></svg>矩形槽 (10)</div></td><td></td><td><svg class="st"><use href="#ok"/></svg></td><td></td></tr>
          <tr><td><div><i class="g"></i><svg class="g"><use href="#gt"/></svg><svg class="st"><use href="#eye"/></svg><svg class="ic"><use href="#chamfer"/></svg>倒斜角 (11)</div></td><td></td><td><svg class="st"><use href="#ok"/></svg></td><td></td></tr>
          <tr><td><div><i class="g"></i><svg class="g"><use href="#gt"/></svg><svg class="st"><use href="#eye"/></svg><svg class="ic"><use href="#thread"/></svg>M8 x 1.25 螺纹孔 (12)</div></td><td></td><td><svg class="st"><use href="#ok"/></svg></td><td></td></tr>
          <tr><td><div><i class="g"></i><svg class="g"><use href="#gt"/></svg><svg class="st"><use href="#eye"/></svg><svg class="ic"><use href="#thread"/></svg>M8 x 1.25 螺纹孔 (13)</div></td><td></td><td><svg class="st"><use href="#ok"/></svg></td><td></td></tr>
          <tr><td><div><i class="g"></i><svg class="g"><use href="#gt"/></svg><svg class="st"><use href="#eye"/></svg><svg class="ic"><use href="#hole"/></svg>Ø4 孔 (14)</div></td><td></td><td><svg class="st"><use href="#ok"/></svg></td><td></td></tr>
          <tr><td><div><i class="g"></i><svg class="g"><use href="#gt"/></svg><svg class="st"><use href="#eye"/></svg><svg class="ic"><use href="#chamfer"/></svg>倒斜角 (15)</div></td><td></td><td><svg class="st"><use href="#ok"/></svg></td><td></td></tr>
          <tr><td><div><i class="g"></i><svg class="g"><use href="#gt"/></svg><svg class="st"><use href="#eye"/></svg><svg class="ic"><use href="#hole"/></svg>Ø4 孔 (16)</div></td><td></td><td><svg class="st"><use href="#ok"/></svg></td><td></td></tr>
          <tr><td><div><i class="g"></i><svg class="g"><use href="#gt"/></svg><svg class="st"><use href="#eye"/></svg><svg class="ic"><use href="#chamfer"/></svg>倒斜角 (17)</div></td><td></td><td><svg class="st"><use href="#ok"/></svg></td><td></td></tr>
          <tr class="off"><td><div><i class="g"></i><svg class="g"><use href="#gt"/></svg><svg class="st"><use href="#eye-off"/></svg><svg class="ic"><use href="#plane"/></svg>基准平面 (18)</div></td><td></td><td><svg class="st"><use href="#ok"/></svg></td><td></td></tr>
          <tr class="off"><td><div><i class="g"></i><svg class="g"><use href="#gt"/></svg><svg class="st"><use href="#eye-off"/></svg><svg class="ic"><use href="#plane"/></svg>基准平面 (19)</div></td><td></td><td><svg class="st"><use href="#ok"/></svg></td><td></td></tr>
          <tr><td><div><i class="g"></i><svg class="g"><use href="#gt"/></svg><svg class="st"><use href="#eye"/></svg><svg class="ic"><use href="#slot"/></svg>矩形槽 (20)</div></td><td></td><td><svg class="st"><use href="#ok"/></svg></td><td></td></tr>
          <tr><td><div><i class="g"></i><svg class="g"><use href="#gt"/></svg><svg class="st"><use href="#eye"/></svg><svg class="ic"><use href="#slot"/></svg>矩形槽 (21)</div></td><td></td><td><svg class="st"><use href="#ok"/></svg></td><td></td></tr>
          </tbody>
        </table>
        </div>
        <div class="vscroll"><i class="vhead"></i><i class="vthumb"></i></div>
      </div>
      <div class="hscroll"><i></i></div>
    </div>
    <div class="split"></div>
    <button class="fold">搜索</button>
    <button class="fold">相关性</button>
    <button class="fold">细节</button>
    <button class="fold">预览</button>
  </aside>

  <main class="stage">
    <div class="tabs">
      <div class="tab"><svg width="14" height="16" viewBox="0 0 14 16"><path d="M1 4h10v6l-3 5H2z" fill="#ddd" stroke="#222"/><path d="M0 3h12V0" fill="none" stroke="#111" stroke-width="1.500"/><path d="M1 4.500h10" stroke="#fff"/><circle cx="6.500" cy="9.500" r="2.500" fill="#368" stroke="#222"/></svg><span>shaft.prt</span><svg width="11" height="11" viewBox="0 0 11 11"><path d="M6 10H1V1h6l2 2M4 .5h3M6 7l4-4M7 9h2V6" fill="none" stroke="#fff" stroke-width="1.300"/></svg><button aria-label="关闭"><svg width="9" height="9" viewBox="0 0 9 9"><path d="M1 1l7 7M8 1L1 8" stroke="#fff" stroke-width="2"/></svg></button></div>
    </div>
    <div class="sheet">
      <svg class="drawing" viewBox="360 205 1560 805">
        <defs>
          <clipPath id="cc"><path d="M561 767.500V776h24.500v-8.500A41 41 0 1 1 561 767.500z"/></clipPath>
          <clipPath id="dc"><path d="M1694.500 767.500V776h25v-8.500A41 41 0 1 1 1694.500 767.500z"/></clipPath>
        </defs>
        <path d="M367 276.500H1912" stroke="#000" stroke-dasharray="8 8"/>
        <g fill="none" stroke="#000" stroke-width="1.700">
          <path d="M572 460.500h41.500V502M613.500 619v41.500H572M1724 460.500h-40.500V502M1683.500 619v41.500H1724" stroke-width="1.400"/>
          <path d="M533 519.500h17q5 0 10 2h104q7-2 10-2h6M533 602.500h147M680 519.500v83M680 521.500h6M680 600.500h6"/>
          <path d="M688 509h94.500v103.500H688M783 511.500h6M783 610.500h6M789.500 501.500h717.500v118H789.500z"/>
          <path d="M1507 511.500h6M1507 610.500h6M1625 509h-111.500v103.500H1625M1627 521.500h6M1627 600.500h6"/>
          <path d="M1724 519.500h-11q-3 0-8 2h-44q-5 0-7-2h-20.500v83H1724"/>
          <path d="M532.500 520v82M687.500 509.500v102.500M1625.500 509.500v102.500M1724.500 520v82" stroke-width="3"/>
          <path d="M515 560.500H1741" stroke-width="1" stroke-dasharray="74 5 12 5"/>
        </g>
        <path d="M575 460.500l13-2v4zM575 660.500l13-2v4zM1721 460.500l-13-2v4zM1721 660.500l-13-2v4z"/>
        <path d="M620 471.500C655 472 680 485 684 515C686 533 674 534 663 540C640 552 635 582 613 587C600 590 590 586 577 596C568 604 563 615 552 615C530 615 508 585 508 557C508 510 560 471 620 471.500z" fill="none" stroke="#00f" stroke-width="1.500"/>
        <g stroke="#222" clip-path="url(#cc)"><path d="M489 844l80-80M500.500 844l80-80M512 844l80-80M523.500 844l80-80M526 853l80-80M538 853l80-80M550 853l80-80M562 853l80-80M574 853l80-80M478 844l80-80"/></g>
        <g stroke="#222" clip-path="url(#dc)"><path d="M1623.500 844l80-80M1635 844l80-80M1646.500 844l80-80M1658 844l80-80M1660.500 853l80-80M1672.500 853l80-80M1684.500 853l80-80M1696.500 853l80-80M1708.500 853l80-80M1612.500 844l80-80"/></g>
        <path d="M561 768v8h24.500v-8A41 41 0 1 1 561 768z" fill="none" stroke="#000" stroke-width="1.500"/>
        <path d="M1694.500 768v8h25v-8L1733 776l11 14 4 17-3 16-8 15-11 8-13 3h-14l-13-5-12-10-7-13-1-19 3-15 11-14z" fill="none" stroke="#000" stroke-width="1.500"/>
        <circle cx="1706.500" cy="807.500" r="7" fill="none" stroke="#000" stroke-width="2"/>
        <path d="M572.500 745v50M572.500 801v11M572.500 818v51M511 807.500h49M567 807.500h11M585 807.500h49M1707.500 745v124M1646 807.500h123" stroke="#555"/>
        <g class="cad">
          <text x="646" y="472">C</text><text x="646" y="672">C</text>
          <text x="1634" y="472">D</text><text x="1634" y="672">D</text>
          <text x="476" y="724">SECTION C-C</text><text x="1620" y="732">SECTION D-D</text>
        </g>
        <text class="sheet-name" x="371" y="1003">"A3_1"</text>
      </svg>
      <div class="snap">
        <button aria-label="重合"><svg width="24" height="24"><path d="M1 23L23 1M8 15h9M12.500 10v10" class="k"/></svg></button>
        <button aria-label="共线"><svg width="24" height="24"><path d="M1 23l8-9M14 10l9-9" class="k"/></svg></button>
        <button aria-label="水平"><svg width="24" height="24"><path d="M0 12.500h24" class="k"/></svg></button>
        <button aria-label="竖直"><svg width="24" height="24"><path d="M12.500 1v23" class="k"/></svg></button>
        <button aria-label="相切"><svg width="24" height="24"><path d="M1 20L19 1" class="k"/><circle cx="16" cy="16" r="7.500" class="k"/></svg></button>
        <button aria-label="平行"><svg width="24" height="24"><path d="M0 19L17 1M8 23L24 8" class="k"/></svg></button>
        <button aria-label="垂直"><svg width="24" height="24"><path d="M1 8l15 15M9 16L24 1" class="k"/></svg></button>
        <button aria-label="相等"><svg width="24" height="24"><path d="M1 9.500h22M1 16.500h22" class="k"/></svg></button>
        <button aria-label="对称"><svg width="24" height="24"><path d="M1 3h6v7h10V3h6v19H1z" class="k"/><path d="M12.500 1v23" class="o" stroke-dasharray="4 2"/></svg></button>
        <button aria-label="中点"><svg width="24" height="24"><path d="M3.500 1v23M9 12.500h2M12 12.500h2M16 12.500h8" class="k"/><circle cx="3.500" cy="12" r="2.500" fill="#f08020"/></svg></button>
        <i class="bar"></i><i class="tri"></i>
      </div>
    </div>
  </main>
</div>

<footer class="status"><span>选择对象并使用 MB3，或双击，或按住并拖动来移动视图、尺寸或注释</span><span>草图未评估</span>
  <div class="ime">
    <svg class="logo" width="32" height="32" viewBox="0 0 32 32"><path d="M4 4L24 1q3 0 3.500 3L31 23q0 3-3 4L10 31q-4 0-5-4L1 8q0-3 3-4z" fill="#f04e17"/><path d="M24 8Q9 6 9 12q0 3 7 3.500 7 .5 6.500 4T8 23" fill="none" stroke="#fff" stroke-width="4"/></svg>
    <b>中</b>
    <svg width="16" height="16"><circle cx="5" cy="5" r="2.200" fill="none" stroke="#006bdc" stroke-width="1.500"/><path d="M10 8h3q1 5-3 6" fill="#006bdc"/></svg>
    <svg width="16" height="16"><path d="M5.500 3q2.500-5 5 0v5q-2.500 4-5 0z" fill="#006bdc"/><path d="M2.500 7q1 5 5.500 5t5.500-5M8 12v3" fill="none" stroke="#006bdc" stroke-width="1.500"/></svg>
    <svg width="16" height="16"><path d="M1.500 2.500h13v11h-13z" fill="none" stroke="#006bdc" stroke-width="1.500"/><path d="M4 5.500h8.500M4 8h8.500" stroke="#006bdc" stroke-width="1.600" stroke-dasharray="2 1"/><path d="M5 11h6" stroke="#006bdc" stroke-width="1.500"/></svg>
    <svg width="16" height="16"><path d="M1 3h4q3 2 5 0h4v5h-2v7H4V8H1z" fill="url(#shirt)"/><circle cx="13.500" cy="2.500" r="2.500" fill="#ff4a30"/></svg>
    <svg width="16" height="16"><path d="M4 2h8q4 2 3.500 10l-2 2-3-3h-5l-3 3-2-2Q0 4 4 2z" fill="#006bdc"/><path d="M3.500 6.500h4M5.500 4.500v4M10 5h2M11 8h2" stroke="#fff" stroke-width="1.300"/></svg>
    <svg width="16" height="16"><path d="M2 2h5v5H2zM2 9h5v5H2zM9 9h5v5H9z" fill="#006bdc"/><circle cx="11.500" cy="4.500" r="2.700" fill="#006bdc"/></svg>
    <svg width="16" height="16"><path d="M8 1l2 2 4 0-1 3.500 2 2-2 2 1 3.500h-3.500L8 15l-2.500-1H2l1-3.500-2-2 2-2L2 3l4 0z" fill="#006bdc"/><path d="M8 5v10M5.500 8v3M10.500 8v3" stroke="#fff"/></svg>
  </div>
  <div class="mark">CSDN @山涧果子</div>
</footer>
</body>
</html>
```
FILE: styles.css
```css
* { box-sizing: border-box; }
body {
  margin: 0; height: 100vh; display: flex; flex-direction: column; overflow: hidden;
  font: 12px/16px "Noto Sans", "Noto Sans CJK SC", sans-serif; color: #1a1a1a; background: #fff;
}
button { border: 0; padding: 0; margin: 0; background: none; font: inherit; color: inherit; }
a { color: inherit; text-decoration: none; }
svg { display: block; flex: none; }
.defs { position: absolute; width: 0; height: 0; }
.dot { fill: none; stroke: #999; stroke-dasharray: 1 1; }
.c { fill: none; stroke: #00a5cf; stroke-width: 1.500; }
.k { fill: none; stroke: #404040; stroke-width: 1.200; }
.o { fill: none; stroke: #ec7a10; stroke-width: 1.400; }
.tri { flex: none; width: 6px; height: 4px; background: currentColor; clip-path: polygon(0 0, 100% 0, 50% 100%); }

/* title bar and menu */
.top { background: linear-gradient(90deg, #006185, #007ba8); color: #fff; flex: none; }
.titlebar { height: 26px; display: flex; align-items: center; gap: 7px; padding-left: 4px; }
.titlebar .sep { width: 1px; height: 18px; background: #004a68; flex: none; }
.q { display: flex; align-items: center; gap: 4px; font-size: 11px; flex: none; }
.q svg { fill: none; stroke: #fff; }
.q .lit { stroke: #00c4e6; stroke-width: 1.500; }
.q .solid { fill: #fff; stroke: none; }
.dim svg { stroke: #3488a8; }
.nx { font: bold 22px/26px "Open Sans", "Noto Sans", sans-serif; width: 30px; }
.save { margin: 0 4px 0 2px; }
.undo { margin-left: -6px; }
.curve { margin-left: -2px; }
.near { margin-left: -2px; }
.win { gap: 3px; }
.win-tri { margin: 0 2px 0 -3px; }
h1 { flex: 1; margin: 0; text-align: center; font-size: 12px; font-weight: 400; }
.siemens { font: 800 13px/16px Inter, sans-serif; padding-top: 2px; }
.w1 { margin-left: 20px; }
.w2 { margin-left: 5px; }
.w3 { margin: 0 8px 0 5px; }
.menubar { height: 30px; display: flex; align-items: stretch; font-size: 13px; line-height: 28px; white-space: nowrap; }
.menubar > a { padding: 0 12px; border-bottom: 2px solid transparent; }
.menubar .file { padding: 0 24px 0 20px; }
.menubar .on { color: #ffcc4d; margin-bottom: 2px; border-color: #ffcc4d; }
.tools-right { margin-left: auto; display: flex; align-items: center; gap: 10px; padding-right: 11px; }
.find { display: flex; align-items: center; width: 178px; height: 22px; background: #fff; border: 1px solid #777; padding-right: 2px; }
.find input { flex: 1; min-width: 0; border: 0; padding: 0; outline: 0; background: none; font: 11px/16px "Noto Sans", "Noto Sans CJK SC", sans-serif; }
.find input::placeholder { color: #a8a8a8; }
.bang { margin-left: 6px; }

/* ribbon */
.ribbon { flex: none; height: 94px; display: flex; border-bottom: 1px solid #d9d9d9; font-size: 11px; white-space: nowrap; }
.grp { display: flex; flex-direction: column; justify-content: space-between; padding: 5px 0 0 11px; margin-bottom: 4px; border-right: 1px solid #d9d9d9; }
.g2 { padding-left: 8px; }
.g3 { padding: 5px 5px 0 6px; }
.tools { display: flex; }
.t { width: 40px; height: 64px; display: flex; flex-direction: column; align-items: center; justify-content: flex-start; }
.t svg { margin-bottom: 4px; }
.t .tri { margin-top: 4px; }
.w44 { width: 44px; } .w46 { width: 46px; } .w48 { width: 48px; }
.w56 { width: 56px; } .w58 { width: 58px; } .w60 { width: 60px; }
.col { display: flex; flex-direction: column; }
.mid { margin: 2px 0 0 6px; width: 70px; gap: 7px; }
.small { width: 52px; gap: 7px; }
.s { display: flex; align-items: center; gap: 4px; }
.more { margin-right: 3px; }
.more2 { margin: 0 3px 0 8px; }
.cap { display: flex; height: 10px; line-height: 10px; color: #005f87; margin-left: -8px; }
.g3 .cap { margin: 0 -4px 0 0; }
.cap span { flex: 1; text-align: center; }
.cap button { width: 20px; display: flex; align-items: center; justify-content: center; color: #222; }
.edge { margin-left: auto; align-self: flex-end; padding: 0 6px 8px 0; }
.edge .tri { display: block; }

/* selection bar */
.selbar { flex: none; height: 28px; display: flex; align-items: center; border-bottom: 1px solid #a8a8a8; font-size: 11px; padding-left: 13px; }
.menu { display: flex; align-items: center; width: 76px; }
.menu svg { margin-right: 6px; }
.menu .tri { margin-left: 7px; }
.bar { width: 1px; height: 20px; background: #d0d0d0; flex: none; }
.combo { display: flex; align-items: center; height: 22px; border: 1px solid #666; }
.combo select { appearance: none; flex: 1; min-width: 0; border: 0; background: none; padding: 0 0 0 2px; font: inherit; color: inherit; }
.combo::after { content: ""; width: 8px; height: 5px; margin-right: 4px; background: #222; clip-path: polygon(0 0, 100% 0, 50% 100%); }
.c1 { width: 149px; margin: 0 8px 0 12px; }
.c2 { width: 156px; margin: 0 8px 0 10px; }
.i3 { margin-left: 7px; }
.selbar > .tri { margin: 0 12px 0 8px; }

/* work area */
.work { flex: 1; min-height: 0; display: flex; }
.rail { flex: none; width: 37px; background: #dcdcdc; border-right: 1px solid #a0a0a0; display: flex; flex-direction: column; }
.rail button { height: 44px; display: flex; align-items: center; justify-content: center; }
.rail .gear { height: 33px; padding-bottom: 3px; }
.rail .on { background: #fff; margin: 0 -1px 0 3px; border: 1px solid #a0a0a0; border-right: 0; }
.panel { flex: none; width: 323px; border-right: 1px solid #a0a0a0; padding: 0 9px 6px 8px; display: flex; flex-direction: column; }
h2 { margin: 0 0 0 -2px; padding-bottom: 2px; height: 27px; font-size: 12px; font-weight: 500; display: flex; align-items: center; gap: 3px; flex: none; }
.max { margin: 0 1px 0 auto; width: 13px; height: 11px; border: 1px solid #000; border-top-width: 2px; }
.tree { flex: 1; min-height: 0; display: flex; flex-direction: column; border: 1px solid #ddd; background: #f0f0f0; }
.tree-body { flex: 1; min-height: 0; display: flex; }
.rows { flex: 1; overflow: hidden; }
table { width: 100%; table-layout: fixed; border-collapse: separate; border-spacing: 0; }
.n { width: 24px; } .note { width: 37px; }
th { height: 21px; padding: 3px 0 0 6px; line-height: 17px; text-align: left; font-weight: 400; background: #f0f0f0; border: solid #ccc; border-width: 0 1px 1px 0; white-space: nowrap; }
.mid-h { padding-left: 5px; }
.nb { border-right: 0; }
.sort { display: inline-block; width: 9px; height: 5px; margin: 0 0 2px 18px; background: #111; clip-path: polygon(50% 0, 100% 100%, 0 100%); }
td { height: 20px; padding: 0; background: #fff; border: solid #e8e8e8; border-width: 0 1px 1px 0; }
td:last-child { border-right: 0; }
tr:nth-child(even) td { background: #fafafa; }
td > div { display: flex; align-items: center; height: 19px; overflow: hidden; white-space: nowrap; }
td > .st { margin: 0 auto; }
.g { width: 19px; height: 20px; flex: none; }
.st { width: 15px; height: 16px; }
.ic { width: 17px; height: 16px; margin-right: 3px; }
.off { color: #a0a0a0; }
.vscroll { width: 17px; display: flex; flex-direction: column; }
.vhead { height: 21px; border-bottom: 1px solid #ccc; margin-bottom: 17px; }
.vthumb { width: 2px; height: 535px; margin-left: 8px; background: #888; }
.hscroll { height: 16px; display: flex; align-items: center; flex: none; }
.hscroll i { width: 207px; height: 2px; margin-left: 17px; background: #888; }
.split { flex: none; height: 6px; margin-top: 2px; background: #dcdcdc; border: 1px solid #a0a0a0; }
.fold { flex: none; height: 24px; display: flex; align-items: center; gap: 9px; padding: 2px 0 0 10px; border-bottom: 2px solid #ccc; font-size: 14px; color: #005f87; }
.fold::before { content: ""; width: 5px; height: 8px; background: #005f87; clip-path: polygon(0 0, 100% 50%, 0 100%); }

/* drawing window */
.stage { flex: 1; min-width: 0; display: flex; flex-direction: column; }
.tabs { flex: none; height: 27px; border-bottom: 2px solid #005f87; display: flex; }
.tab { height: 25px; width: 112px; background: #005f87; color: #fff; display: flex; align-items: center; gap: 6px; padding-left: 7px; }
.sheet { flex: 1; min-height: 0; position: relative; background: #ccc; }
.drawing { width: 100%; height: 100%; }
.cad { font: 29px "Liberation Mono", monospace; fill: #222; stroke: #ccc; stroke-width: 1; }
.sheet-name { font: 13px "Liberation Sans", sans-serif; }
.snap { position: absolute; top: 5px; left: 603px; width: 354px; height: 34px; background: #fff; border-bottom: 1px solid #ddd; display: flex; align-items: center; gap: 9px; padding-left: 9px; }
.snap .bar { height: 26px; margin-left: -2px; }
.snap .tri { margin: 12px 0 0 -5px; }

/* status bar */
.status { flex: none; height: 26px; position: relative; display: grid; grid-template-columns: 931fr 986fr; padding: 0 0 0 3px; border-top: 1px solid #a0a0a0; border-bottom: 4px solid #c8efee; font-size: 11px; font-weight: 700; line-height: 21px; }
.ime { position: absolute; left: 1037px; bottom: 0; width: 226px; height: 26px; background: #fff; border: 1px solid #b4cfe8; display: flex; align-items: center; gap: 8px; }
.ime b { width: 16px; font-size: 14px; color: #006bdc; text-align: center; }
.logo { margin: -4px -3px 0 -1px; }
.mark { position: absolute; right: 4px; bottom: 1px; font: 36px/44px "Liberation Sans", "Noto Sans CJK SC", sans-serif; color: #ffffff90; text-shadow: 1px 1px 1px #0006, -1px -1px 0 #fff5; white-space: nowrap; }
```
